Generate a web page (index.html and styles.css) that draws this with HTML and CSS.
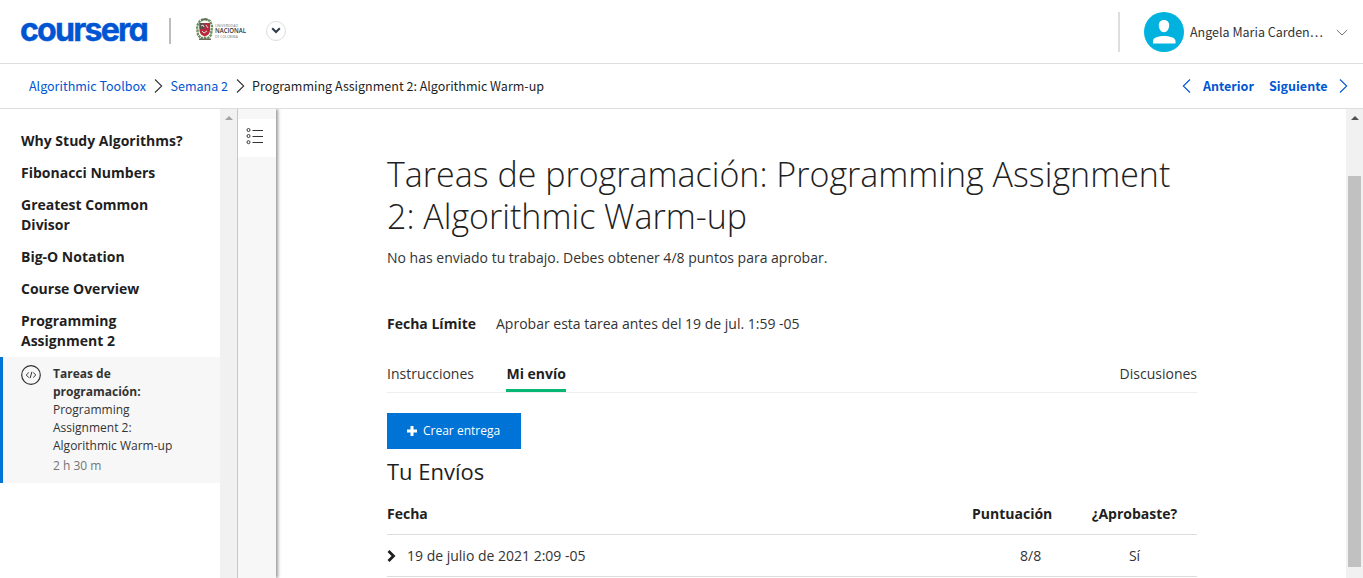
FILE: index.html
```
<!DOCTYPE html>
<html lang="es">
<head>
<meta charset="utf-8">
<title>Programming Assignment 2: Algorithmic Warm-up</title>
<link rel="stylesheet" href="styles.css">
</head>
<body>
<header class="header">
  <svg class="logo" width="130" height="44" viewBox="0 0 130 44"><text class="logo-text" x="-1" y="32.500" textLength="127" lengthAdjust="spacingAndGlyphs">coursera</text></svg>
  <span class="logo-divider"></span>
  <svg class="partner" width="52" height="24" viewBox="0 0 52 24">
    <path d="M9 1 14 3 16 8 15 17 12 20 5 20 2 17 1 8 4 3Z" fill="none" stroke="#6f9160" stroke-width="2.4" stroke-dasharray="2.5 .7"/>
    <path d="M5 1.5h7M3 21.3h12" stroke="#6b6b5c" stroke-width="1.6"/>
    <path d="M3.500 5h10.500v8q-.5 4-5.200 5.500Q4 17 3.500 13Z" fill="#b9283c"/>
    <path d="M3.500 5h5v6h-5z" fill="#55524f"/>
    <path d="m5 8 2-1 1 2M10 7l2 3M6 13l2 2 3-2" stroke="#e8dcdc" fill="none"/>
    <text x="19" y="8.600" class="p-small" textLength="23" lengthAdjust="spacingAndGlyphs">UNIVERSIDAD</text>
    <text x="19" y="15" class="p-big" textLength="31" lengthAdjust="spacingAndGlyphs">NACIONAL</text>
    <text x="19" y="19.500" class="p-small" textLength="23" lengthAdjust="spacingAndGlyphs">DE COLOMBIA</text>
  </svg>
  <span class="round"><svg width="10" height="7" viewBox="0 0 10 7"><path d="m1.200 1.200 3.800 3.800 3.800-3.800" fill="none" stroke="#2f3b4a" stroke-width="2"/></svg></span>
  <div class="user">
    <svg width="40" height="40" viewBox="0 0 40 40"><circle cx="20" cy="20" r="20" fill="#00b2dd"/><path d="M20 8c3.500 0 5.200 2.300 5.200 5.200 0 3.600-2 7-5.200 7s-5.200-3.400-5.200-7C14.800 10.300 16.500 8 20 8ZM9 31.500V29c0-3.500 6-4.900 11-4.900S31.500 25.500 31.500 29v2.500Z" fill="#fff"/></svg>
    <span class="user-name">Angela Maria Carden…</span>
    <svg class="user-chev" width="12" height="8" viewBox="0 0 12 8"><path d="m.8 1 5.200 5 5.200-5" fill="none" stroke="#757575"/></svg>
  </div>
</header>
<nav class="crumbs">
  <a class="c1">Algorithmic Toolbox</a>
  <svg class="sep" width="9" height="16" viewBox="0 0 9 16"><path d="m1 1.500 6.700 6.500L1 14.500" fill="none" stroke="#333" stroke-width="1.100"/></svg>
  <a class="c2">Semana 2</a>
  <svg class="sep" width="9" height="16" viewBox="0 0 9 16"><path d="m1 1.500 6.700 6.500L1 14.500" fill="none" stroke="#333" stroke-width="1.100"/></svg>
  <span class="c3">Programming Assignment 2: Algorithmic Warm-up</span>
  <div class="pager">
    <svg width="9" height="16" viewBox="0 0 9 16"><path d="M8 1.500 1.300 8 8 14.500" fill="none" stroke="#0056d2" stroke-width="1.100"/></svg>
    <b class="prev">Anterior</b>
    <b class="next">Siguiente</b>
    <svg width="9" height="16" viewBox="0 0 9 16"><path d="m1 1.500 6.700 6.500L1 14.500" fill="none" stroke="#0056d2" stroke-width="1.100"/></svg>
  </div>
</nav>
<div class="layout">
  <aside class="side">
    <ul class="lessons">
      <li>Why Study Algorithms?</li>
      <li>Fibonacci Numbers</li>
      <li>Greatest Common<br>Divisor</li>
      <li>Big-O Notation</li>
      <li>Course Overview</li>
      <li>Programming<br>Assignment 2</li>
    </ul>
    <div class="current">
      <svg width="20" height="20" viewBox="0 0 20 20" fill="none" stroke="#333"><circle cx="10" cy="10" r="9.300" stroke-width="1.200"/><path d="M7.800 7.500 5.200 10l2.600 2.500M12.200 7.500l2.600 2.500-2.600 2.500M10.900 6.800l-1.800 6.400"/></svg>
      <div class="current-text"><b>Tareas de programación:</b><br>Programming<br>Assignment 2:<br>Algorithmic Warm-up<div class="time">2 h 30 m</div></div>
    </div>
  </aside>
  <div class="bar side-bar"><svg width="8" height="4" viewBox="0 0 8 4"><path d="M0 4 4 0l4 4Z" fill="#a3a3a3"/></svg></div>
  <div class="strip"><div class="strip-tab">
    <svg width="18" height="18" viewBox="0 0 18 18" fill="none" stroke="#333"><circle cx="2.500" cy="3" r="1.500"/><circle cx="2.500" cy="9" r="1.500"/><circle cx="2.500" cy="15.200" r="1.500"/><path d="M6.500 3.500H17M6.500 9.500H17M6.500 15.500H17"/></svg>
  </div></div>
  <main class="main">
    <h1>Tareas de programación: Programming Assignment<br>2: Algorithmic Warm-up</h1>
    <p class="status">No has enviado tu trabajo. Debes obtener 4/8 puntos para aprobar.</p>
    <p class="due"><b>Fecha Límite</b><span>Aprobar esta tarea antes del 19 de jul. 1:59 -05</span></p>
    <div class="tabs"><span>Instrucciones</span><b class="tab-on">Mi envío</b><span class="right">Discusiones</span></div>
    <button class="create"><svg width="10" height="10" viewBox="0 0 10 10"><path d="M5 0v10M0 5h10" stroke="#fff" stroke-width="3"/></svg><span>Crear entrega</span></button>
    <h2>Tu Envíos</h2>
    <div class="row head"><span>Fecha</span><span class="score">Puntuación</span><span class="pass">¿Aprobaste?</span></div>
    <div class="row"><span class="date"><svg width="9" height="12" viewBox="0 0 9 12"><path d="m1.500 1 5 5-5 5" fill="none" stroke="#1f1f1f" stroke-width="2.800"/></svg>19 de julio de 2021 2:09 -05</span><span class="score value">8/8</span><span class="pass">Sí</span></div>
  </main>
  <div class="bar main-bar"><svg width="8" height="4" viewBox="0 0 8 4"><path d="M0 4 4 0l4 4Z" fill="#505050"/></svg><div class="thumb"></div></div>
</div>
</body>
</html>
```
FILE: styles.css
```
* { box-sizing: border-box; }
body { margin: 0; height: 578px; overflow: hidden; background: #fff; color: #1f1f1f; font: 14px/20px "Open Sans", sans-serif; display: flex; flex-direction: column; }
svg { display: block; flex: none; }
h1, h2, p, ul { margin: 0; padding: 0; font-weight: 400; }
.header { flex: none; height: 64px; border-bottom: 1px solid #dedede; display: flex; align-items: center; padding: 0 15px 0 21px; }
.logo { margin-top: -4px; overflow: visible; }
.logo-text { font-family: Inter, sans-serif; font-size: 32px; font-weight: 700; letter-spacing: -1.800px; font-feature-settings: "cv11", "ss03"; fill: #0056d2; stroke: #0056d2; stroke-width: .4px; }
.logo-divider { width: 2px; height: 26px; background: #bdbdbd; margin: -2px 0 0 18px; }
.partner { margin: -3px 0 0 25px; }
.p-small { font: 4px "Open Sans", sans-serif; fill: #777; }
.p-big { font: 600 6.500px "Open Sans", sans-serif; fill: #333; }
.round { width: 20px; height: 20px; border: 1px solid #ddd; border-radius: 50%; display: flex; align-items: center; justify-content: center; margin: -2px 0 0 18px; }
.user { margin-left: auto; height: 40px; display: flex; align-items: center; border-left: 2px solid #dedede; padding-left: 24px; font: 12.500px/20px "Noto Sans CJK SC", sans-serif; color: #333; }
.user-name { width: 152px; padding-left: 6px; white-space: nowrap; }
.user-chev { margin-top: 2px; }
.crumbs { flex: none; height: 45px; border-bottom: 1px solid #dedede; display: flex; align-items: center; padding: 0 15px 0 29px; font: 12.530px/20px "Noto Sans CJK SC", sans-serif; white-space: nowrap; }
.crumbs a, .crumbs b { color: #0056d2; }
.c1 { width: 118px; }
.c2 { width: 58px; }
.sep { margin: 0 7.500px 0 7px; }
.pager { margin-left: auto; display: flex; align-items: center; }
.prev { width: 67px; padding-left: 12px; }
.next { width: 59px; margin: 0 11px; }
.layout { flex: 1; min-height: 0; display: flex; }
.side { width: 220px; padding-top: 22px; }
.lessons { list-style: none; padding-left: 21px; display: flex; flex-direction: column; gap: 12px; font-weight: 700; white-space: nowrap; }
.current { margin-top: 6px; height: 126px; background: #f7f7f7; border-left: 3px solid #0073d6; padding: 8px 0 0 18px; display: flex; gap: 12px; font-size: 12px; line-height: 18px; color: #333; }
.current-text { width: 140px; }
.current-text b { font-weight: 700; }
.time { color: #757575; padding-top: 2px; }
.bar { width: 17px; background: #f1f1f1; display: flex; flex-direction: column; align-items: center; padding-top: 7px; }
.strip { width: 39px; background: #f7f7f7; border-left: 1px solid #c7c7c7; padding-top: 10px; box-shadow: 2px 0 3px rgba(0,0,0,.4); clip-path: inset(0 -6px 0 0); }
.strip-tab { height: 38px; background: #fff; padding: 8px 0 0 8px; }
.main { width: 810px; margin: 44px 148px 0 111px; white-space: nowrap; flex: none; }
.bar.main-bar { margin-left: auto; flex: none; }
.thumb { width: 13px; height: 391px; margin-top: 56px; background: #c1c1c1; }
h1 { font-size: 34px; line-height: 42px; font-weight: 300; }
.status { margin-top: 11px; color: #333; }
.due { margin-top: 46px; display: flex; gap: 20px; }
.due b, .tabs b, .head { font-weight: 700; }
.due span, .tabs span { color: #333; }
.tabs { display: flex; margin-top: 22px; height: 37px; padding-top: 8px; border-bottom: 1px solid #eee; }
.tab-on { margin: -1px 0 0 32px; padding: 1px 0 0 .500px; height: 29px; border-bottom: 3px solid #08b776; }
.right { margin-left: auto; }
.create { margin-top: 20px; width: 134px; height: 36px; border: 0; background: #0073d6; color: #fff; font: 12px/18px "Open Sans", sans-serif; padding: 0 0 0 20px; display: flex; align-items: center; gap: 6px; }
h2 { font-size: 22px; line-height: 28px; margin: 8px 0 1px; }
.row { display: grid; grid-template-columns: 565px 120px 125px; height: 42px; line-height: 42px; border-bottom: 1px solid #ddd; color: #333; }
.row.head { height: 49px; line-height: 56px; color: #1f1f1f; }
.score { padding-left: 20px; }
.score.value { padding-left: 68px; }
.pass { text-align: center; }
.date { display: flex; align-items: center; gap: 11px; }
```
